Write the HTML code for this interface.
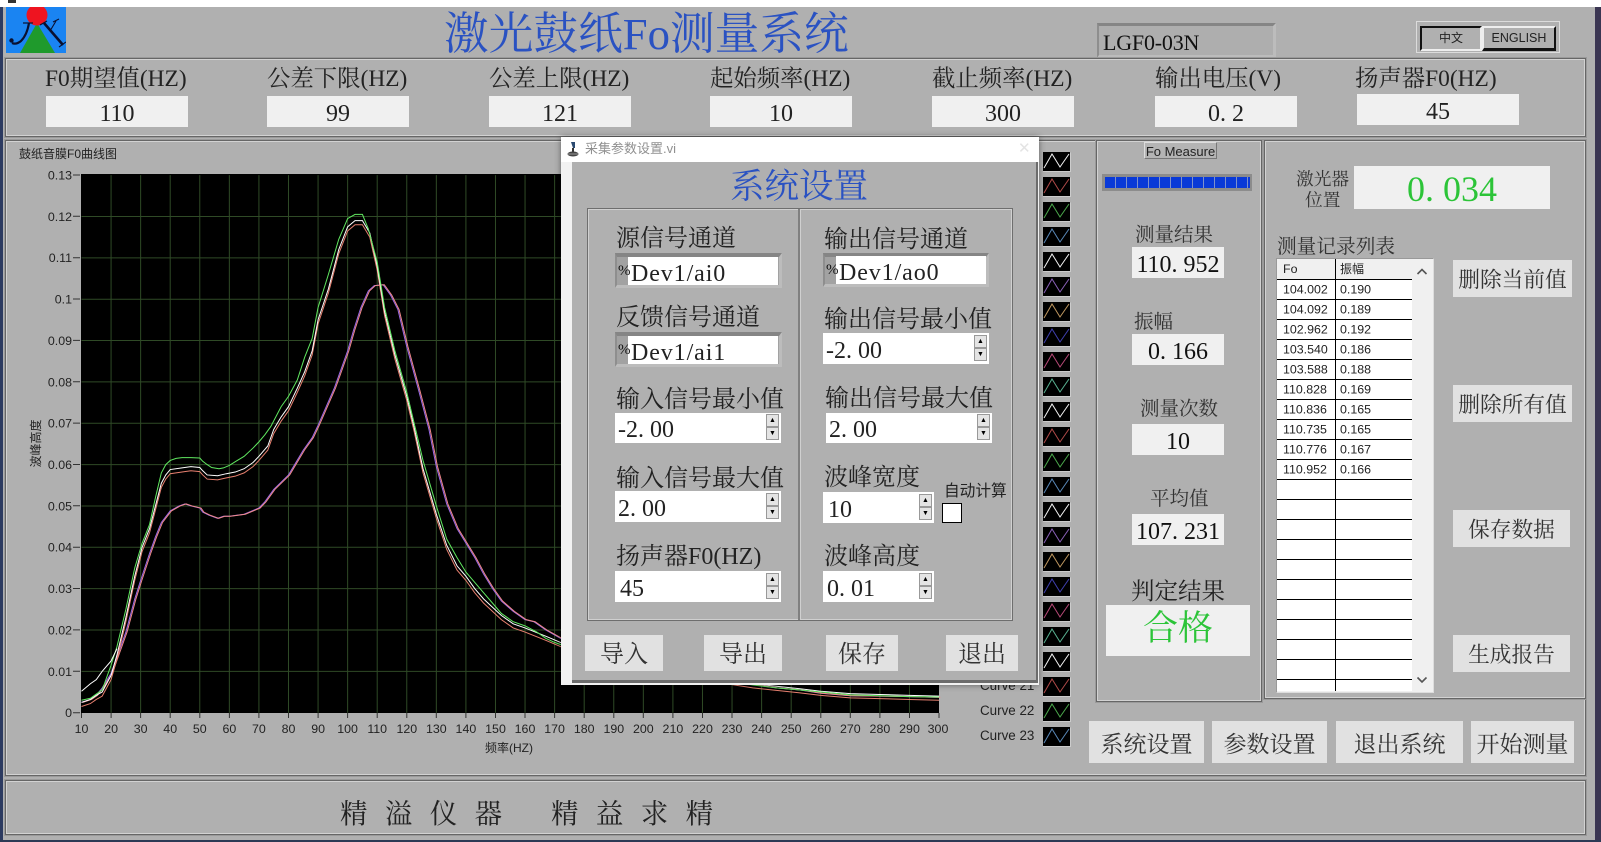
<!DOCTYPE html>
<html lang="zh"><head><meta charset="utf-8"><title>激光鼓纸Fo测量系统</title>
<style>
html,body{margin:0;padding:0;background:#b0b0b0}
#r{position:relative;width:1601px;height:842px;overflow:hidden;background:#b0b0b0;font-family:"Liberation Serif","Noto Serif CJK SC",serif;color:#222}
#r div{position:absolute;box-sizing:border-box}
.t{white-space:nowrap;height:30px;line-height:30px;font-size:24px}
.c{text-align:center}
.p{border:1px solid #666;box-shadow:inset 0 0 0 1px #d2d2d2,0 0 0 1px #9a9a9a}
.b{background:#f0f0f0;text-align:center;font-size:24px;white-space:nowrap}
.w{background:#fff;font-size:24px;white-space:nowrap;padding-left:3px}
.d{letter-spacing:.25em}
.m{letter-spacing:.9px}
.g{background:#e1e1e1;text-align:center;white-space:nowrap;color:#333}
.f{background:#a2a2a2;border-top:4px solid #858585;border-left:2px solid #8e8e8e;border-right:3px solid #bcbcbc;border-bottom:3px solid #bcbcbc}
.s{width:13px;background:#e4e4e4;border:1px solid #999;font:7px/11px "Liberation Sans",sans-serif;text-align:center;color:#000}
.sa{font-family:"Liberation Sans","Noto Sans CJK SC",sans-serif}
</style></head><body>
<div id="r">
<div style="left:0;top:0;width:1601px;height:7px;background:#fff"></div>
<div style="left:8px;top:0;width:8px;height:3px;background:#333"></div>
<div style="left:0;top:7px;width:3px;height:835px;background:#2c3a60"></div>
<div style="left:1595px;top:7px;width:6px;height:835px;background:#3a3552"></div>
<div style="left:0;top:840px;width:1601px;height:2px;background:#2c3a55"></div>

<svg style="position:absolute;left:6px;top:7px" width="60" height="46" viewBox="0 0 60 46">
<rect width="60" height="46" fill="#1a84f2"/>
<path d="M31 16L49 46H14Z" fill="#1f9a2c"/>
<circle cx="31" cy="8" r="10.500" fill="#ee1420"/>
<path d="M17 16H27" stroke="#0a1030" stroke-width="1.200"/>
<path d="M23 16Q21 28 15 34Q10 38 6 36" fill="none" stroke="#0a1030" stroke-width="2.200"/>
<circle cx="5.500" cy="33.500" r="2.200" fill="#0a1030"/>
<path d="M38 16L57 38" stroke="#0a1030" stroke-width="2.600"/>
<path d="M50 14L44 24M34 18L41 14M47 15L53 12M53 40L60 35" stroke="#0a1030" stroke-width="1.100" fill="none"/>
</svg>

<div class="t" style="left:444px;top:11px;height:46px;line-height:46px;font-size:44.700px;color:#2a52c2">激光鼓纸Fo测量系统</div>

<div class="f" style="left:1097px;top:23px;width:179px;height:35px;border-top-width:3px;background:#aeaeae"></div>
<div class="t" style="left:1103px;top:28px;font-size:22px;letter-spacing:-.2px;color:#111">LGF0-03N</div>

<div style="left:1416px;top:21px;width:144px;height:32px;border:1px solid #dcdcdc"></div>
<div class="sa c" style="left:1420px;top:26px;width:62px;height:25px;border:2px solid #111;border-right-color:#eee;border-bottom-color:#eee;font-size:12px;line-height:21px;color:#222">中文</div>
<div class="sa c" style="left:1482px;top:26px;width:74px;height:25px;border:2px solid #eee;border-right-color:#111;border-bottom-color:#111;border-bottom-width:3px;font-size:12.500px;line-height:21px;color:#222">ENGLISH</div>

<div class="p" style="left:5px;top:58px;width:1581px;height:79px"></div>
<div class="t" style="left:45px;top:64px;font-size:23.400px">F0期望值(HZ)</div>
<div class="t" style="left:267px;top:64px;font-size:23.400px">公差下限(HZ)</div>
<div class="t" style="left:489px;top:64px;font-size:23.400px">公差上限(HZ)</div>
<div class="t" style="left:710px;top:64px;font-size:23.400px">起始频率(HZ)</div>
<div class="t" style="left:932px;top:64px;font-size:23.400px">截止频率(HZ)</div>
<div class="t" style="left:1155px;top:64px;font-size:23.400px">输出电压(V)</div>
<div class="t" style="left:1355px;top:64px;font-size:23.400px">扬声器F0(HZ)</div>
<div class="b" style="left:46px;top:96px;width:142px;height:31px;line-height:37px">110</div>
<div class="b" style="left:267px;top:96px;width:142px;height:31px;line-height:37px">99</div>
<div class="b" style="left:489px;top:96px;width:142px;height:31px;line-height:37px">121</div>
<div class="b" style="left:710px;top:96px;width:142px;height:31px;line-height:37px">10</div>
<div class="b" style="left:932px;top:96px;width:142px;height:31px;line-height:37px">300</div>
<div class="b" style="left:1155px;top:96px;width:142px;height:31px;line-height:37px">0<span class="d">.</span>2</div>
<div class="b" style="left:1357px;top:94px;width:162px;height:31px;line-height:37px">45</div>

<div class="p" style="left:5px;top:140px;width:1581px;height:636px"></div>
<div class="p" style="left:5px;top:780px;width:1581px;height:55px"></div>
<div class="t" style="left:340px;top:799px;font-size:27.500px;word-spacing:10.500px">精 溢 仪 器</div>
<div class="t" style="left:551px;top:799px;font-size:27.500px;word-spacing:10.500px">精 益 求 精</div>

<div class="sa t" style="left:19px;top:139px;font-size:12px">鼓纸音膜F0曲线图</div>

<svg style="position:absolute;left:0;top:0" width="1601" height="842" font-family="Liberation Sans, Noto Sans CJK SC, sans-serif" font-size="12.4" fill="#222">
<defs>
<path id="a" vector-effect="non-scaling-stroke" d="M10 .3L13 .35 15 .45 17 .55 20 1.15 22 1.6 25 2.5 28 3.5 30.5 4.1 33 4.55 35 5.2 37 5.8 38.5 6 40 6.1 42 6.15 44 6.17 47 6.17 50 6.16 51 6.08 52.5 6 54 5.93 56.5 5.9 58 5.92 60 5.98 62 6.07 65 6.2 68 6.4 70 6.55 72 6.72 74 6.92 77.5 7.4 80 7.65 83 8.05 85.5 8.6 88 9.05 90 9.8 93.5 10.6 97 11.45 100 11.95 102.5 12.05 105 12.05 107 11.7 110 10.9 112.5 9.8 116 8.75 120 7.75 122.5 7 125.5 6.1 130 5 133.5 4.2 137 3.75 140 3.4 143 3.15 146 2.9 149 2.65 152 2.4 156 2.2 160 2.1 164 1.95 167 1.8 170 1.7 172 1.65 175 1.55 180 1.4 190 1.2 200 1.05 210 .95 220 .85 230 .75 237 .67 245 .6 253 .55 260 .5 270 .43 280 .41 290 .39 300 .38"/>
<path id="b" vector-effect="non-scaling-stroke" d="M10 .25L13 .32 15 .42 17 .5 20 .9 22 1.4 25 2.3 28 3.3 30.5 4 33 4.45 35 5 37 5.55 38.5 5.75 40 5.88 44 5.92 47 5.95 50 5.93 51 5.85 52.5 5.75 56 5.73 59 5.78 62 5.82 65 5.9 68 6.05 70 6.2 73 6.45 75 6.85 77.5 7.15 80 7.4 83 7.85 85.5 8.25 88 8.75 90 9.5 93.5 10.25 97 11.2 100 11.75 102.5 11.9 105 11.9 107.5 11.6 110 10.8 112.5 9.7 116 8.65 120 7.65 122.5 6.9 125.5 5.9 130 4.8 133.5 4.05 137 3.55 140 3.3 143 3 146 2.75 149 2.55 152 2.35 156 2.15 160 2.05 167 1.85 172 1.7 180 1.45 190 1.22 200 1.08 210 .98 220 .88 230 .78 237 .7 245 .64 253 .58 260 .52 270 .46 280 .44 290 .42 300 .4"/>
<path id="c" vector-effect="non-scaling-stroke" d="M10 .25L13 .32 15 .42 17 .6 20 .95 22 1.35 25 1.95 28 2.75 30 3.2 33 3.85 35 4.25 37 4.6 40 4.88 43 5 45 5.05 47 5 50 4.95 51 4.85 53 4.78 56 4.7 58 4.75 60 4.75 65 4.8 70 4.95 72 5.1 75 5.4 80 5.75 85 6.35 88 6.65 90 6.95 95.5 7.85 100 8.75 102 9.25 104.5 9.8 107 10.2 109 10.33 112 10.35 114.5 10.1 117 9.75 120 8.85 124 7.8 127.5 6.85 130 5.95 133.5 5.05 137 4.45 140 4.1 143 3.75 146 3.35 149 3 152 2.7 156 2.45 160 2.25 163 2.2 167 2 172 1.8 180 1.55 190 1.3 200 1.15 210 1 220 .9 230 .8 237 .68 245 .6 253 .55 260 .47 270 .41 280 .4 290 .39 300 .37"/>
<path id="z" fill="none" stroke-width="1" d="M1 16L9 2 17 15 26 2"/>
</defs>
<rect x="81" y="174" width="858" height="539" fill="#000"/>
<g transform="translate(81.5 712.7) scale(2.957 -41.35) translate(-10 0)">
<path vector-effect="non-scaling-stroke" fill="none" stroke="#2f4a26" stroke-width="1" d="M20 0V13M30 0V13M40 0V13M50 0V13M60 0V13M70 0V13M80 0V13M90 0V13M100 0V13M110 0V13M120 0V13M130 0V13M140 0V13M150 0V13M160 0V13M170 0V13M180 0V13M190 0V13M200 0V13M210 0V13M220 0V13M230 0V13M240 0V13M250 0V13M260 0V13M270 0V13M280 0V13M290 0V13M10 1H300M10 2H300M10 3H300M10 4H300M10 5H300M10 6H300M10 7H300M10 8H300M10 9H300M10 10H300M10 11H300M10 12H300"/>
<g fill="none" stroke-width="1">
<use href="#c" stroke="#9a6ae8"/>
<use href="#c" stroke="#f08a8a" transform="translate(.4 0)"/>
<use href="#b" stroke="#e88070" transform="translate(0 -.1)"/>
<use href="#b" stroke="#fff"/>
<use href="#a" stroke="#60e860"/>
<path vector-effect="non-scaling-stroke" stroke="#fff" d="M10 .52L13 .7 15 .8 17 1 20 1.25 22 1.55"/>
</g>
</g>
<path stroke="#333" fill="none" d="M73 175h7M73 216.3h7M73 257.7h7M73 299h7M73 340.4h7M73 381.8h7M73 423.1h7M73 464.5h7M73 505.8h7M73 547.2h7M73 588.5h7M73 629.9h7M73 671.3h7M73 712.7h7M81.5 713v5M111.1 713v5M140.6 713v5M170.2 713v5M199.8 713v5M229.4 713v5M258.9 713v5M288.5 713v5M318.1 713v5M347.6 713v5M377.2 713v5M406.8 713v5M436.3 713v5M465.9 713v5M495.5 713v5M525 713v5M554.6 713v5M584.2 713v5M613.8 713v5M643.3 713v5M672.9 713v5M702.5 713v5M732 713v5M761.6 713v5M791.2 713v5M820.8 713v5M850.3 713v5M879.9 713v5M909.5 713v5M939 713v5"/>
<g text-anchor="end">
<text x="72" y="179.5">0.13</text><text x="72" y="220.8">0.12</text><text x="72" y="262.2">0.11</text><text x="72" y="303.5">0.1</text><text x="72" y="344.9">0.09</text><text x="72" y="386.3">0.08</text><text x="72" y="427.6">0.07</text><text x="72" y="469">0.06</text><text x="72" y="510.3">0.05</text><text x="72" y="551.7">0.04</text><text x="72" y="593">0.03</text><text x="72" y="634.4">0.02</text><text x="72" y="675.8">0.01</text><text x="72" y="717.2">0</text>
</g>
<g text-anchor="middle">
<text x="81.5" y="733">10</text><text x="111.1" y="733">20</text><text x="140.6" y="733">30</text><text x="170.2" y="733">40</text><text x="199.8" y="733">50</text><text x="229.4" y="733">60</text><text x="258.9" y="733">70</text><text x="288.5" y="733">80</text><text x="318.1" y="733">90</text><text x="347.6" y="733">100</text><text x="377.2" y="733">110</text><text x="406.8" y="733">120</text><text x="436.3" y="733">130</text><text x="465.9" y="733">140</text><text x="495.5" y="733">150</text><text x="525" y="733">160</text><text x="554.6" y="733">170</text><text x="584.2" y="733">180</text><text x="613.8" y="733">190</text><text x="643.3" y="733">200</text><text x="672.9" y="733">210</text><text x="702.5" y="733">220</text><text x="732" y="733">230</text><text x="761.6" y="733">240</text><text x="791.2" y="733">250</text><text x="820.8" y="733">260</text><text x="850.3" y="733">270</text><text x="879.9" y="733">280</text><text x="909.5" y="733">290</text><text x="938" y="733">300</text>
<text x="509" y="752" font-size="12">频率(HZ)</text>
<text transform="translate(40 443.5) rotate(-90)" font-size="12">波峰高度</text>
</g>
<text x="980" y="690" font-size="13.4">Curve 21</text><text x="980" y="715" font-size="13.4">Curve 22</text><text x="980" y="740" font-size="13.4">Curve 23</text>
<g id="lg">
<path fill="#000" stroke="none" d="M1043 152h27v19h-27zM1043 177h27v19h-27zM1043 202h27v19h-27zM1043 227h27v19h-27zM1043 252h27v19h-27zM1043 277h27v19h-27zM1043 302h27v19h-27zM1043 327h27v19h-27zM1043 352h27v19h-27zM1043 377h27v19h-27zM1043 402h27v19h-27zM1043 427h27v19h-27zM1043 452h27v19h-27zM1043 477h27v19h-27zM1043 502h27v19h-27zM1043 527h27v19h-27zM1043 552h27v19h-27zM1043 577h27v19h-27zM1043 602h27v19h-27zM1043 627h27v19h-27zM1043 652h27v19h-27zM1043 677h27v19h-27zM1043 702h27v19h-27zM1043 727h27v19h-27z"/>
<path fill="none" stroke="#ccc" d="M1043 171.5h27.5v-19M1043 196.5h27.5v-19M1043 221.5h27.5v-19M1043 246.5h27.5v-19M1043 271.5h27.5v-19M1043 296.5h27.5v-19M1043 321.5h27.5v-19M1043 346.5h27.5v-19M1043 371.5h27.5v-19M1043 396.5h27.5v-19M1043 421.5h27.5v-19M1043 446.5h27.5v-19M1043 471.5h27.5v-19M1043 496.5h27.5v-19M1043 521.5h27.5v-19M1043 546.5h27.5v-19M1043 571.5h27.5v-19M1043 596.5h27.5v-19M1043 621.5h27.5v-19M1043 646.5h27.5v-19M1043 671.5h27.5v-19M1043 696.5h27.5v-19M1043 721.5h27.5v-19M1043 746.5h27.5v-19"/>
<use href="#z" x="1043" y="152" stroke="#f4f4f4"/><use href="#z" x="1043" y="177" stroke="#b04a48"/><use href="#z" x="1043" y="202" stroke="#4caa4c"/><use href="#z" x="1043" y="227" stroke="#5a88b8"/><use href="#z" x="1043" y="252" stroke="#f4f4f4"/><use href="#z" x="1043" y="277" stroke="#8a60b8"/><use href="#z" x="1043" y="302" stroke="#c09860"/><use href="#z" x="1043" y="327" stroke="#4040b0"/><use href="#z" x="1043" y="352" stroke="#b84a78"/><use href="#z" x="1043" y="377" stroke="#58b090"/><use href="#z" x="1043" y="402" stroke="#f4f4f4"/><use href="#z" x="1043" y="427" stroke="#b04a48"/><use href="#z" x="1043" y="452" stroke="#4caa4c"/><use href="#z" x="1043" y="477" stroke="#5a88b8"/><use href="#z" x="1043" y="502" stroke="#f4f4f4"/><use href="#z" x="1043" y="527" stroke="#8a60b8"/><use href="#z" x="1043" y="552" stroke="#c09860"/><use href="#z" x="1043" y="577" stroke="#4040b0"/><use href="#z" x="1043" y="602" stroke="#b84a78"/><use href="#z" x="1043" y="627" stroke="#58b090"/><use href="#z" x="1043" y="652" stroke="#f4f4f4"/><use href="#z" x="1043" y="677" stroke="#b04a48"/><use href="#z" x="1043" y="702" stroke="#4caa4c"/><use href="#z" x="1043" y="727" stroke="#5a88b8"/>
</g>
</svg>

<!-- right panels -->
<div class="p" style="left:1096px;top:140px;width:166px;height:562px"></div>
<div class="p" style="left:1264px;top:140px;width:322px;height:559px"></div>
<div class="sa c" style="left:1144px;top:142px;width:73px;height:17px;border:1px solid #777;border-top-color:#ddd;border-left-color:#ddd;font-size:13px;line-height:17px;background:#b4b4b4">Fo Measure</div>
<div style="left:1102px;top:174px;width:150px;height:17px;background:#8c8c8c"></div>
<div style="left:1105px;top:177px;width:145px;height:11px;background:repeating-linear-gradient(90deg,#0a3ad8 0,#0a3ad8 10px,#7f92cc 10px,#7f92cc 11px)"></div>

<div class="t c" style="left:1096px;width:156px;top:221px;font-size:19.500px;color:#333">测量结果</div>
<div class="b" style="left:1132px;top:247px;width:92px;height:31px;line-height:37px;color:#111">110<span class="d">.</span>952</div>
<div class="t" style="left:1134px;top:308px;font-size:19.500px;color:#333">振幅</div>
<div class="b" style="left:1132px;top:334px;width:92px;height:31px;line-height:37px;color:#111">0<span class="d">.</span>166</div>
<div class="t" style="left:1140px;top:395px;font-size:19.500px;color:#333">测量次数</div>
<div class="b" style="left:1132px;top:424px;width:92px;height:31px;line-height:37px;color:#111">10</div>
<div class="t" style="left:1150px;top:485px;font-size:19.500px;color:#333">平均值</div>
<div class="b" style="left:1132px;top:514px;width:92px;height:31px;line-height:37px;color:#111">107<span class="d">.</span>231</div>
<div class="t" style="left:1131px;top:577px;font-size:23.500px">判定结果</div>
<div class="b" style="left:1106px;top:605px;width:144px;height:51px;line-height:48px;font-size:35px;color:#2cc438">合格</div>

<div class="t" style="left:1296px;top:164px;font-size:17.700px;color:#333">激光器</div>
<div class="t" style="left:1305px;top:185px;font-size:17.700px;color:#333">位置</div>
<div class="b" style="left:1354px;top:166px;width:196px;height:43px;line-height:46px;font-size:36px;color:#2cc438">0<span class="d">.</span>034</div>

<div class="t" style="left:1277px;top:232px;font-size:19.700px;color:#333">测量记录列表</div>

<div style="left:1276px;top:258px;width:158px;height:435px;background:#f0f0f0;border:1px solid #999;border-bottom-color:#ddd;border-right-color:#ddd"></div>
<div style="left:1277px;top:279px;width:135px;height:412px;background:#fff"></div>
<svg style="position:absolute;left:1277px;top:259px" width="157" height="433" font-family="Liberation Sans, Noto Sans CJK SC, sans-serif" font-size="12.4" fill="#222">
<path stroke="#000" stroke-width="1" fill="none" d="M0 20.5H135M0 40.5H135M0 60.5H135M0 80.5H135M0 100.5H135M0 120.5H135M0 140.5H135M0 160.5H135M0 180.5H135M0 200.5H135M0 220.5H135M0 240.5H135M0 260.5H135M0 280.5H135M0 300.5H135M0 320.5H135M0 340.5H135M0 360.5H135M0 380.5H135M0 400.5H135M0 420.5H135"/>
<path stroke="#000" fill="none" d="M58.5 0V432"/>
<text x="6" y="14">Fo</text><text x="63" y="14" font-size="12">振幅</text>
<text x="6" y="34.5">104.002</text><text x="63" y="34.5">0.190</text>
<text x="6" y="54.5">104.092</text><text x="63" y="54.5">0.189</text>
<text x="6" y="74.5">102.962</text><text x="63" y="74.5">0.192</text>
<text x="6" y="94.5">103.540</text><text x="63" y="94.5">0.186</text>
<text x="6" y="114.5">103.588</text><text x="63" y="114.5">0.188</text>
<text x="6" y="134.5">110.828</text><text x="63" y="134.5">0.169</text>
<text x="6" y="154.5">110.836</text><text x="63" y="154.5">0.165</text>
<text x="6" y="174.5">110.735</text><text x="63" y="174.5">0.165</text>
<text x="6" y="194.5">110.776</text><text x="63" y="194.5">0.167</text>
<text x="6" y="214.5">110.952</text><text x="63" y="214.5">0.166</text>
<path fill="none" stroke="#555" stroke-width="1.6" d="M140.5 15L145 10.5 149.5 15M140.5 418.5L145 423 149.5 418.5"/>
</svg>

<div class="g" style="left:1453px;top:260px;width:119px;height:37px;line-height:41px;font-size:21.700px">删除当前值</div>
<div class="g" style="left:1453px;top:385px;width:119px;height:37px;line-height:41px;font-size:21.700px">删除所有值</div>
<div class="g" style="left:1453px;top:510px;width:117px;height:37px;line-height:41px;font-size:21.700px">保存数据</div>
<div class="g" style="left:1453px;top:635px;width:117px;height:37px;line-height:41px;font-size:21.700px">生成报告</div>
<div class="g" style="left:1089px;top:721px;width:115px;height:42px;line-height:47px;font-size:23px">系统设置</div>
<div class="g" style="left:1212px;top:721px;width:115px;height:42px;line-height:47px;font-size:23px">参数设置</div>
<div class="g" style="left:1336px;top:721px;width:127px;height:42px;line-height:47px;font-size:23px">退出系统</div>
<div class="g" style="left:1471px;top:721px;width:103px;height:42px;line-height:47px;font-size:23px">开始测量</div>

<!-- dialog -->
<div style="left:561px;top:137px;width:478px;height:548px;background:#f2f2f2;box-shadow:0 0 6px rgba(0,0,0,.45)"></div>
<div style="left:561px;top:137px;width:478px;height:25px;background:#fff"></div>
<div style="left:572px;top:162px;width:466px;height:521px;background:#b0b0b0;border-right:2px solid #6c6c6c;border-bottom:3px solid #6c6c6c"></div>
<svg style="position:absolute;left:566px;top:141px" width="14" height="17" viewBox="0 0 14 17"><path d="M5 1h4v6H7z" fill="#2a4a70"/><path d="M7 7v5" stroke="#333" stroke-width="2"/><ellipse cx="7" cy="13" rx="5.500" ry="2.500" fill="#444"/><path d="M2 13h10" stroke="#999"/></svg>
<div class="sa t" style="left:585px;top:134px;font-size:13px;color:#909090">采集参数设置.vi</div>
<div class="sa t" style="left:1018px;top:134px;font-size:15px;color:#e4e4e4">✕</div>
<div class="t" style="left:730px;top:172px;font-size:34.500px;color:#2a52c2">系统设置</div>
<div style="left:587px;top:208px;width:426px;height:413px;border:1px solid #6e6e6e;box-shadow:inset 0 0 0 1px #d0d0d0"></div>
<div style="left:798px;top:209px;width:3px;height:411px;background:#808080;border-right:1px solid #d0d0d0"></div>

<div class="t" style="left:616px;top:224px">源信号通道</div>
<div class="f" style="left:615px;top:253px;width:167px;height:35px"></div>
<div class="w m" style="left:628px;top:257px;width:150px;height:28px;line-height:35px">Dev1/ai0</div>
<div class="t" style="left:618px;top:256px;font-size:15px;letter-spacing:0;color:#111">%</div>
<div class="t" style="left:616px;top:303px">反馈信号通道</div>
<div class="f" style="left:615px;top:332px;width:167px;height:35px"></div>
<div class="w m" style="left:628px;top:336px;width:150px;height:28px;line-height:35px">Dev1/ai1</div>
<div class="t" style="left:618px;top:335px;font-size:15px;color:#111">%</div>
<div class="t" style="left:616px;top:385px">输入信号最小值</div>
<div class="w" style="left:615px;top:413px;width:166px;height:30px;line-height:35px">-2<span class="d">.</span>00</div>
<div class="s" style="left:766px;top:414px;height:13px">▲</div><div class="s" style="left:766px;top:427px;height:13px">▼</div>
<div class="t" style="left:616px;top:464px">输入信号最大值</div>
<div class="w" style="left:615px;top:491px;width:166px;height:31px;line-height:37px">2<span class="d">.</span>00</div>
<div class="s" style="left:766px;top:493px;height:13px">▲</div><div class="s" style="left:766px;top:506px;height:13px">▼</div>
<div class="t" style="left:616px;top:542px">扬声器F0(HZ)</div>
<div class="w" style="left:615px;top:571px;width:166px;height:31px;line-height:37px;padding-left:5px">45</div>
<div class="s" style="left:766px;top:573px;height:13px">▲</div><div class="s" style="left:766px;top:586px;height:13px">▼</div>

<div class="t" style="left:824px;top:225px">输出信号通道</div>
<div class="f" style="left:823px;top:253px;width:166px;height:34px"></div>
<div class="w m" style="left:836px;top:256px;width:150px;height:28px;line-height:35px">Dev1/ao0</div>
<div class="t" style="left:826px;top:255px;font-size:15px;color:#111">%</div>
<div class="t" style="left:824px;top:305px">输出信号最小值</div>
<div class="w" style="left:823px;top:333px;width:166px;height:31px;line-height:37px">-2<span class="d">.</span>00</div>
<div class="s" style="left:974px;top:335px;height:13px">▲</div><div class="s" style="left:974px;top:348px;height:13px">▼</div>
<div class="t" style="left:825px;top:384px">输出信号最大值</div>
<div class="w" style="left:826px;top:413px;width:166px;height:30px;line-height:35px">2<span class="d">.</span>00</div>
<div class="s" style="left:977px;top:414px;height:13px">▲</div><div class="s" style="left:977px;top:427px;height:13px">▼</div>
<div class="t" style="left:824px;top:463px">波峰宽度</div>
<div class="w" style="left:823px;top:492px;width:111px;height:31px;line-height:36px;padding-left:5px">10</div>
<div class="s" style="left:919px;top:494px;height:13px">▲</div><div class="s" style="left:919px;top:507px;height:13px">▼</div>
<div class="sa t" style="left:944px;top:477px;font-size:15.700px">自动计算</div>
<div style="left:942px;top:503px;width:20px;height:20px;background:#fff;border:1px solid #000"></div>
<div class="t" style="left:824px;top:542px">波峰高度</div>
<div class="w" style="left:823px;top:571px;width:111px;height:31px;line-height:37px;padding-left:4px">0<span class="d">.</span>01</div>
<div class="s" style="left:919px;top:573px;height:13px">▲</div><div class="s" style="left:919px;top:586px;height:13px">▼</div>

<div class="g" style="left:585px;top:635px;width:78px;height:36px;line-height:41px;font-size:24px">导入</div>
<div class="g" style="left:704px;top:635px;width:78px;height:36px;line-height:41px;font-size:24px">导出</div>
<div class="g" style="left:826px;top:635px;width:72px;height:36px;line-height:41px;font-size:24px">保存</div>
<div class="g" style="left:946px;top:635px;width:72px;height:36px;line-height:41px;font-size:24px">退出</div>
</div>
</body></html>
